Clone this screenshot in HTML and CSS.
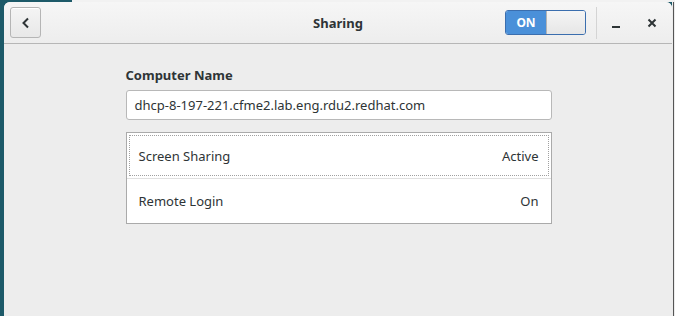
FILE: index.html
```html
<!DOCTYPE html>
<html>
<head>
    <meta charset="UTF-8">
    <title>Sharing</title>
    <link rel="stylesheet" href="styles.css">
</head>
<body>
    <div class="window">
        <div class="header-bar">
            <button class="back-button" aria-label="Back">
                <svg width="12" height="12" viewBox="0 0 12 12">
                    <path d="M8 1.5 L3.5 6 L8 10.5" fill="none" stroke="#2e3436" stroke-width="2"/>
                </svg>
            </button>
            <div class="title">Sharing</div>
            <div class="header-end">
                <div class="switch">
                    <span class="switch-on">ON</span>
                    <span class="switch-knob"></span>
                </div>
                <div class="separator"></div>
                <button class="window-button" aria-label="Minimize">
                    <svg width="10" height="10" viewBox="0 0 10 10">
                        <rect x="1" y="8" width="8" height="2" fill="#2e3436"/>
                    </svg>
                </button>
                <button class="window-button" aria-label="Close">
                    <svg width="10" height="10" viewBox="0 0 10 10">
                        <path d="M1.5 1.5 L8.5 8.5 M8.5 1.5 L1.5 8.5" stroke="#2e3436" stroke-width="2"/>
                    </svg>
                </button>
            </div>
        </div>
        <div class="content">
            <div class="section">
                <div class="section-label">Computer Name</div>
                <div class="name-entry">dhcp-8-197-221.cfme2.lab.eng.rdu2.redhat.com</div>
                <div class="list-box">
                    <div class="list-row focused">
                        <span>Screen Sharing</span>
                        <span>Active</span>
                    </div>
                    <div class="list-row">
                        <span>Remote Login</span>
                        <span>On</span>
                    </div>
                </div>
            </div>
        </div>
    </div>
</body>
</html>
```

FILE: styles.css
```css
html, body {
    height: 100%;
}

body {
    margin: 0;
    font-family: "Noto Sans", "DejaVu Sans", sans-serif;
    font-size: 13px;
    color: #2e3436;
    background:
        linear-gradient(to right, #1d5a69 0 72px, #f2f2f2 72px) top / 100% 2px no-repeat,
        linear-gradient(to right, #1d5a69 0 672px, #ececec 672px, #ececec 673px, #555 673px, #555 674px, #ececec 674px);
    display: flex;
    overflow: hidden;
}

.window {
    margin: 2px 0 0 4px;
    width: 668px;
    display: flex;
    flex-direction: column;
    background-color: #ededed;
    border-radius: 6px 6px 0 0;
    overflow: hidden;
}

.header-bar {
    height: 41px;
    flex-shrink: 0;
    display: flex;
    align-items: center;
    padding: 0 5px 0 6px;
    background: linear-gradient(#f6f6f6, #ededed);
    border-bottom: 1px solid #b6b6b6;
    position: relative;
}

.back-button {
    width: 31px;
    height: 31px;
    padding: 0;
    display: flex;
    align-items: center;
    justify-content: center;
    border: 1px solid #b5b5b5;
    border-radius: 3px;
    background: linear-gradient(#f4f4f4, #e8e8e8);
    box-shadow: inset 0 1px #fff;
}

.title {
    position: absolute;
    left: 0;
    right: 0;
    text-align: center;
    font-weight: bold;
    pointer-events: none;
    color: #2e3436;
}

.header-end {
    margin-left: auto;
    display: flex;
    align-items: center;
}

.switch {
    width: 81px;
    height: 25px;
    display: flex;
    border: 1px solid #3b6eae;
    border-radius: 3px;
    overflow: hidden;
    box-sizing: border-box;
}

.switch-on {
    width: 40px;
    display: flex;
    align-items: center;
    justify-content: center;
    background-color: #4a90d9;
    color: #fff;
    font-weight: bold;
    font-size: 12px;
}

.switch-knob {
    flex: 1;
    background: linear-gradient(#f5f5f5, #e6e6e6);
    border-left: 1px solid #b3b3b3;
}

.separator {
    width: 1px;
    height: 32px;
    margin: 0 4px 0 10px;
    background-color: #d4d4d4;
}

.window-button {
    width: 30px;
    height: 30px;
    padding: 0;
    border: none;
    background: none;
    display: flex;
    align-items: center;
    justify-content: center;
}

.window-button + .window-button {
    margin-left: 6px;
}

.content {
    flex: 1;
    display: flex;
    justify-content: center;
}

.section {
    width: 426px;
    margin-left: 1px;
    padding-top: 22px;
}

.section-label {
    font-weight: bold;
    margin-bottom: 6px;
}

.name-entry {
    height: 28px;
    line-height: 28px;
    padding: 0 8px;
    background-color: #fff;
    border: 1px solid #b8b8b8;
    border-radius: 3px;
    margin-bottom: 12px;
}

.list-box {
    background-color: #fff;
    border: 1px solid #aaa;
}

.list-row {
    height: 45px;
    display: flex;
    align-items: center;
    justify-content: space-between;
    padding: 0 12px;
    box-sizing: border-box;
}

.list-row + .list-row {
    border-top: 1px solid #e0e0e0;
}

.list-row.focused {
    outline: 1px dotted #a0a0a0;
    outline-offset: -3px;
}
```
